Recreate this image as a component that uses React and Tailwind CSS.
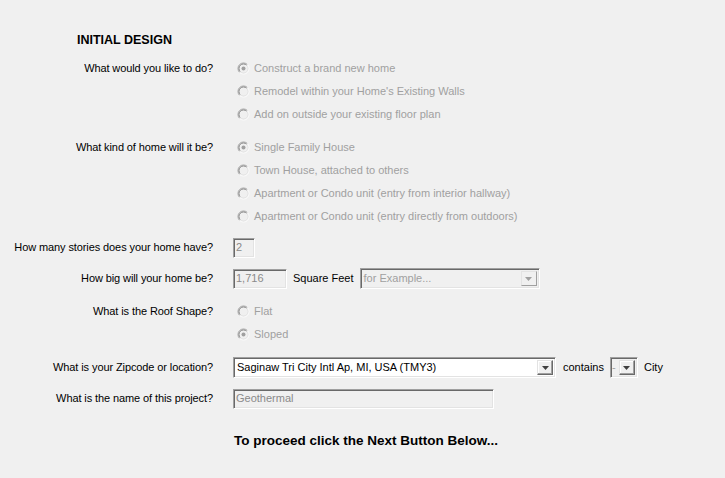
import React from 'react';

const font = { fontFamily: '"Liberation Sans", Arial, sans-serif' };

function Radio({ checked, label }) {
  return (
    <div className="flex h-[23px] items-center">
      <svg width="13" height="13" viewBox="0 0 13 13" className="ml-[4px] shrink-0">
        <circle cx="6.5" cy="6.5" r="5.5" fill="#f0f0f0" />
        <path d="M2.6 10.4 A5.5 5.5 0 0 1 10.4 2.6" fill="none" stroke="#a0a0a0" strokeWidth="1" />
        <path d="M3.3 9.7 A4.5 4.5 0 0 1 9.7 3.3" fill="none" stroke="#8a8a8a" strokeWidth="1" />
        <path d="M10.4 2.6 A5.5 5.5 0 0 1 2.6 10.4" fill="none" stroke="#ffffff" strokeWidth="1" />
        <path d="M9.7 3.3 A4.5 4.5 0 0 1 3.3 9.7" fill="none" stroke="#e3e3e3" strokeWidth="1" />
        {checked && <circle cx="6.5" cy="6.5" r="2" fill="#a0a0a0" />}
      </svg>
      <span className="ml-[4px] text-[11px] text-[#a0a0a0]">{label}</span>
    </div>
  );
}

const sunken =
  'border border-t-[#a0a0a0] border-l-[#a0a0a0] border-b-white border-r-white shadow-[inset_1px_1px_0_#696969,inset_-1px_-1px_0_#e3e3e3]';

function TextBox({ value, className }) {
  return (
    <div className={`${sunken} ${className} flex items-center bg-[#f0f0f0] px-[2px] text-[11px] text-[#8a8a8a]`}>
      {value}
    </div>
  );
}

function Arrow({ color }) {
  return (
    <svg width="7" height="4" viewBox="0 0 7 4">
      <path d="M0 0 H7 L3.5 4 Z" fill={color} />
    </svg>
  );
}

function DropButton({ disabled }) {
  return (
    <div
      className={`my-[2px] mr-[2px] flex w-[16px] items-center justify-center border bg-[#f0f0f0] ${
        disabled
          ? 'border-t-[#e3e3e3] border-l-[#e3e3e3] border-b-[#a0a0a0] border-r-[#a0a0a0]'
          : 'border-t-[#e3e3e3] border-l-[#e3e3e3] border-b-[#696969] border-r-[#696969] shadow-[inset_-1px_-1px_0_#a0a0a0,inset_1px_1px_0_#ffffff]'
      }`}
    >
      <Arrow color={disabled ? '#a0a0a0' : '#404040'} />
    </div>
  );
}

function Select({ value, className, white, disabled }) {
  return (
    <div className={`${sunken} ${className} flex ${white ? 'bg-white' : 'bg-[#f0f0f0]'}`}>
      <div className={`flex flex-1 items-center px-[3px] text-[11px] ${disabled ? 'text-[#a0a0a0]' : 'text-black'}`}>
        {value}
      </div>
      <DropButton disabled={disabled} />
    </div>
  );
}

function Row({ label, children, className = '' }) {
  return (
    <div className={`grid grid-cols-[213px_1fr] gap-x-[20px] ${className}`}>
      <div className="flex h-[23px] items-center justify-end text-[11px] tracking-[-0.1px] text-black">{label}</div>
      <div>{children}</div>
    </div>
  );
}

export default function App() {
  return (
    <div className="h-[478px] w-[725px] overflow-hidden bg-[#f0f0f0] pt-[33px]" style={font}>
      <div className="pl-[77px] text-[12.5px] font-bold leading-[14px] text-black">INITIAL DESIGN</div>

      <Row label="What would you like to do?" className="mt-[10px]">
        <Radio checked label="Construct a brand new home" />
        <Radio label="Remodel within your Home's Existing Walls" />
        <Radio label="Add on outside your existing floor plan" />
      </Row>

      <Row label="What kind of home will it be?" className="mt-[10px]">
        <Radio checked label="Single Family House" />
        <Radio label="Town House, attached to others" />
        <Radio label="Apartment or Condo unit (entry from interior hallway)" />
        <Radio label="Apartment or Condo unit (entry directly from outdoors)" />
      </Row>

      <Row label="How many stories does your home have?" className="mt-[8px]">
        <div className="flex h-[23px] items-center">
          <TextBox value="2" className="h-[20px] w-[22px]" />
        </div>
      </Row>

      <Row label="How big will your home be?" className="mt-[8px]">
        <div className="flex h-[23px] items-center">
          <TextBox value="1,716" className="h-[20px] w-[54px]" />
          <span className="ml-[6px] text-[11px] text-black">Square Feet</span>
          <Select value="for Example..." disabled className="ml-[6px] h-[21px] w-[180px]" />
        </div>
      </Row>

      <Row label="What is the Roof Shape?" className="mt-[10px]">
        <Radio label="Flat" />
        <Radio checked label="Sloped" />
      </Row>

      <Row label="What is your Zipcode or location?" className="mt-[10px]">
        <div className="flex h-[23px] items-center">
          <Select value="Saginaw Tri City Intl Ap, MI, USA (TMY3)" white className="h-[21px] w-[323px]" />
          <span className="ml-[7px] text-[11px] text-black">contains</span>
          <div className={`${sunken} ml-[6px] flex h-[21px] w-[28px] bg-[#f0f0f0]`}>
            <div className="flex flex-1 items-center pl-[1px] text-[11px] text-[#a0a0a0]">-</div>
            <DropButton disabled={false} />
          </div>
          <span className="ml-[6px] text-[11px] text-black">City</span>
        </div>
      </Row>

      <Row label="What is the name of this project?" className="mt-[8px]">
        <div className="flex h-[23px] items-center">
          <TextBox value="Geothermal" className="h-[20px] w-[261px]" />
        </div>
      </Row>

      <div className="mt-[23px] pl-[234px] text-[13.5px] font-bold leading-[16px] text-black">
        To proceed click the Next Button Below...
      </div>
    </div>
  );
}
